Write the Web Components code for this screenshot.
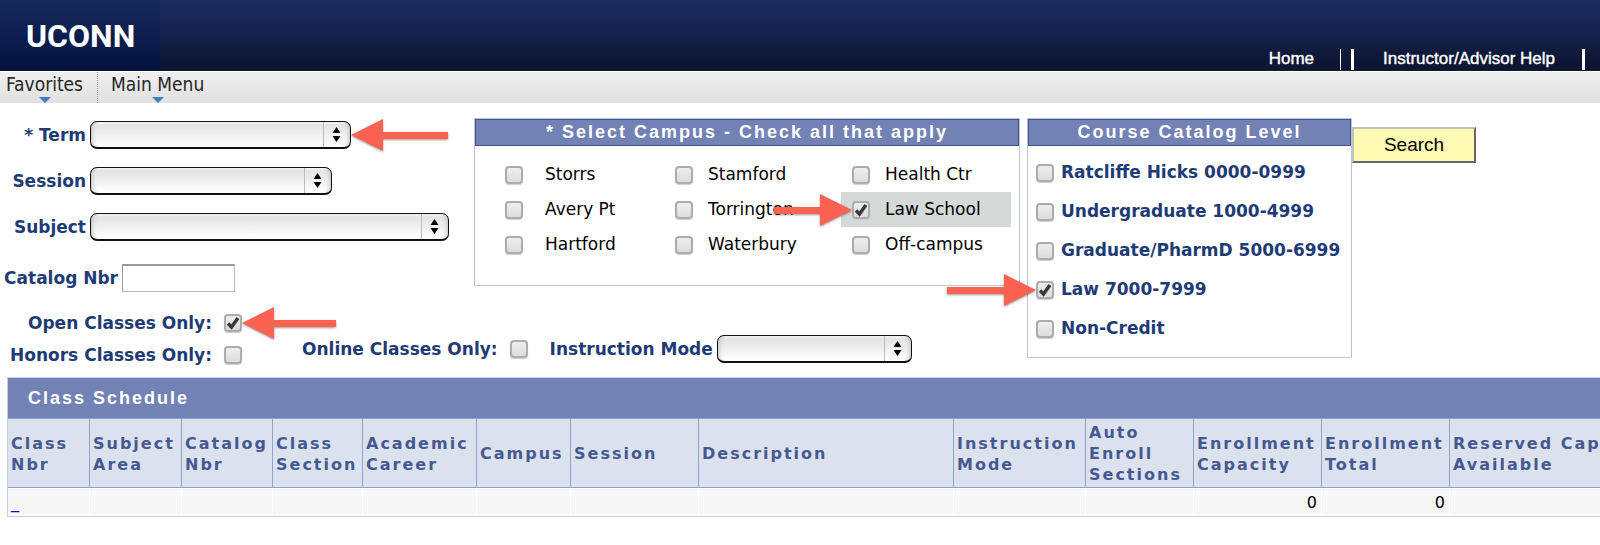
<!DOCTYPE html>
<html lang="en">
<head>
<meta charset="utf-8">
<title>Class Schedule Search</title>
<style>
html, body { margin: 0; padding: 0; background: #fff; overflow-x: hidden; }
body { font: 17px/21px "DejaVu Sans", Verdana, sans-serif; color: #000; }
</style>
</head>
<body>
<class-search-app></class-search-app>

<script>
/* Registers an element whose shadow root is filled from a markup function. */
function define(name, render) {
  customElements.define(name, class extends HTMLElement {
    constructor() {
      super();
      this.attachShadow({ mode: 'open' });
    }
    connectedCallback() {
      const t = document.createElement('template');
      t.innerHTML = render(this);
      this.shadowRoot.replaceChildren(t.content.cloneNode(true));
    }
  });
}

/* Red pointer arrow; lies over the page beside the control it is slotted in. */
define('pointer-arrow', el => {
  const w = Number(el.getAttribute('length'));
  const flip = el.getAttribute('side') === 'left';
  const y = 16;
  const d = flip
    ? `M0 ${y - 3}H${w - 32}V0L${w} ${y}L${w - 32} 32V${y + 4}H0Z`
    : `M${w} ${y - 3}H32V0L0 ${y}L32 32V${y + 4}H${w}Z`;
  return `
  <style>
    :host { position: absolute; top: 50%; margin-top: -16px; width: ${w}px; height: 32px;
      pointer-events: none; z-index: 2; ${flip ? 'right: 100%' : 'left: 100%'}; }
    svg { display: block; overflow: visible; filter: drop-shadow(0 1px 1px rgba(0,0,0,.4)); }
  </style>
  <svg width="${w}" height="32" aria-hidden="true"><path d="${d}" fill="#fa6352"/></svg>`;
});

define('site-header', () => `
  <style>
    :host { display: flex; justify-content: space-between; height: 72px; color: #fff;
      background: linear-gradient(#1a2b61, #16234f 45%, #0d1632 85%, #0d1632); border-bottom: 1px solid #fff; box-sizing: border-box; }
    .logo { width: 160px; box-sizing: border-box; padding: 20px 0 0 26px; background: linear-gradient(#172a5e, #01123c);
      font: 700 32px/32px Roboto, "Liberation Sans", sans-serif; }
    nav { display: flex; align-items: flex-end; padding: 0 15px 1px 0; font: 17px/22px "Liberation Sans", Arial, sans-serif; }
    a { color: #fff; text-decoration: none; -webkit-text-stroke: .4px #fff; }
    i { width: 3px; height: 21px; background: #fff; }
    i.thin { width: 1px; margin: 0 10px 0 26px; }
    .help { margin: 0 27px 0 29px; }
  </style>
  <div class="logo">UCONN</div>
  <nav aria-label="Site"><a href="#">Home</a><i class="thin"></i><i></i><a class="help" href="#">Instructor/Advisor Help</a><i></i></nav>`);

define('menu-bar', () => `
  <style>
    :host { display: flex; height: 31px; background: linear-gradient(#efefef, #e0e0e0);
      font: 19px/25px "DejaVu Sans Condensed", Tahoma, sans-serif; }
    a { display: flex; flex-direction: column; align-items: center; color: #262626; text-decoration: none; padding: 0 14px 0 6px; }
    a + a { padding-left: 13px; border-left: 1px dotted #999; }
    svg { display: block; }
  </style>
  <a href="#">Favorites<svg width="12" height="6" aria-hidden="true"><path d="M0 0h12L6 6z" fill="#3c7fc0"/></svg></a>
  <a href="#">Main Menu<svg width="12" height="6" aria-hidden="true"><path d="M0 0h12L6 6z" fill="#3c7fc0"/></svg></a>`);

/* Label and drop-down; "width" is the width of the drop-down. */
define('select-field', el => `
  <style>
    :host { display: flex; align-items: center; gap: 4px; }
    label { flex: 0 0 var(--label-width, auto); text-align: right; font-weight: 700; color: #1e3b76; white-space: nowrap; }
    .box { position: relative; width: ${el.getAttribute('width')}px; }
    select { display: block; appearance: none; width: 100%; height: 28px; margin: 0; border: 1px solid #111; border-width: 1px 1px 2px;
      border-radius: 7px; background: linear-gradient(#f6f6f6, #e3e3e3 12%, #fbfbfb 85%, #fff);
      box-shadow: inset 5px 0 4px -4px #bbb, inset -5px 0 4px -4px #bbb; }
    svg { position: absolute; top: 1px; right: 1px; pointer-events: none; }
  </style>
  <label for="s">${el.getAttribute('label')}</label>
  <div class="box">
    <select id="s"><option></option></select>
    <svg width="27" height="25" aria-hidden="true"><path d="M.5 0v25" stroke="#bbb"/><path d="M13.500 5l4 6h-8zM13.500 20l4-6h-8z"/></svg>
    <slot></slot>
  </div>`);

define('text-field', el => `
  <style>
    :host { display: flex; align-items: center; gap: 4px; }
    label { flex: 0 0 118px; text-align: right; font-weight: 700; color: #1e3b76; white-space: nowrap; }
    input { box-sizing: border-box; width: 113px; height: 28px; margin: 0; border: 1px solid #bbb; border-top: 2px solid #999; border-left-color: #999; background: #fff; }
  </style>
  <label for="t">${el.getAttribute('label')}</label><input id="t" type="text">`);

/* Tick box with its label after it, or before it with the "before" attribute. */
define('check-field', el => `
  <style>
    :host { display: flex; align-items: center; gap: var(--gap, 20px); color: var(--ink, #1e3b76); font-weight: var(--weight, 700); }
    :host([before]) { flex-direction: row-reverse; justify-content: flex-start; gap: 12px; }
    label { white-space: nowrap; }
    .box { position: relative; width: 18px; height: 18px; }
    input { appearance: none; display: block; box-sizing: border-box; width: 18px; height: 18px; margin: 0; border: 2px solid #acacac;
      border-radius: 4px; background: linear-gradient(#eee, #dcdcdc); box-shadow: 0 1px 1px #ccc; }
    svg { position: absolute; top: 0; left: 0; display: none; pointer-events: none; }
    input:checked + svg { display: block; }
  </style>
  <div class="box">
    <input id="c" type="checkbox"${el.hasAttribute('checked') ? ' checked' : ''}>
    <svg width="18" height="18" aria-hidden="true"><path d="M4 9.500L7.500 13L14 4" fill="none" stroke="#3a3a3a" stroke-width="3.500"/></svg>
    <slot></slot>
  </div>
  <label for="c">${el.getAttribute('label')}</label>`);

define('titled-panel', el => `
  <style>
    :host { display: block; box-sizing: border-box; border: 1px solid #bcc5de; background: #fff; }
    h2 { margin: 0; border: 1px solid #42528c; background: #7282b5; color: #fff; text-align: center;
      font: 700 18px/25px "Liberation Sans", Arial, sans-serif; letter-spacing: 2px; white-space: nowrap; }
  </style>
  <h2>${el.getAttribute('heading')}</h2><slot></slot>`);

define('campus-picker', () => `
  <style>
    :host { display: block; }
    .grid { display: grid; grid-template-columns: 170px 177px 170px; grid-auto-rows: 35px; padding: 11px 8px 23px 19px; }
    check-field { --ink: #000; --weight: 400; --gap: 15px; padding-left: 11px; }
    check-field:nth-child(3n+1) { --gap: 22px; }
    .on { background: #d4dad8; }
  </style>
  <titled-panel heading="* Select Campus - Check all that apply">
    <div class="grid">
      <check-field label="Storrs"></check-field>
      <check-field label="Stamford"></check-field>
      <check-field label="Health Ctr"></check-field>
      <check-field label="Avery Pt"></check-field>
      <check-field label="Torrington"></check-field>
      <check-field class="on" label="Law School" checked><pointer-arrow side="left" length="78"></pointer-arrow></check-field>
      <check-field label="Hartford"></check-field>
      <check-field label="Waterbury"></check-field>
      <check-field label="Off-campus"></check-field>
    </div>
  </titled-panel>`);

define('level-picker', () => `
  <style>
    :host { display: block; }
    .list { display: grid; grid-auto-rows: 39px; padding: 7px 4px 9px 8px; }
    check-field { --gap: 7px; }
  </style>
  <titled-panel heading="Course Catalog Level">
    <div class="list">
      <check-field label="Ratcliffe Hicks 0000-0999"></check-field>
      <check-field label="Undergraduate 1000-4999"></check-field>
      <check-field label="Graduate/PharmD 5000-6999"></check-field>
      <check-field label="Law 7000-7999" checked><pointer-arrow side="left" length="89"></pointer-arrow></check-field>
      <check-field label="Non-Credit"></check-field>
    </div>
  </titled-panel>`);

define('search-form', () => `
  <style>
    form { display: flex; align-items: flex-start; padding: 15px 0 13px; margin: 0; }
    .top, .bottom { display: flex; align-items: flex-start; }
    .fields { width: 474px; padding-top: 3px; display: grid; gap: 18px; --label-width: 86px; }
    text-field { margin-top: 5px; }
    .bottom { padding-top: 22px; }
    .flags { width: 242px; margin-right: 60px; display: grid; gap: 14px; }
    .flags check-field { height: 18px; }
    .modes { display: flex; align-items: center; gap: 22px; padding-top: 21px; }
    level-picker { width: 325px; margin-left: 7px; }
    button { box-sizing: border-box; width: 124px; height: 36px; margin: 9px 0 0; padding: 0; border: 2px solid;
      border-color: #c2c2c2 #666 #666 #c2c2c2; background: #fdfcb2; color: #000; font: 19px/24px "Liberation Sans", Arial, sans-serif; }
  </style>
  <form onsubmit="return false">
    <div>
      <div class="top">
        <div class="fields">
          <select-field label="* Term" width="261"><pointer-arrow side="right" length="97"></pointer-arrow></select-field>
          <select-field label="Session" width="242"></select-field>
          <select-field label="Subject" width="359"></select-field>
          <text-field label="Catalog Nbr"></text-field>
        </div>
        <campus-picker></campus-picker>
      </div>
      <div class="bottom">
        <div class="flags">
          <check-field before label="Open Classes Only:" checked><pointer-arrow side="right" length="94"></pointer-arrow></check-field>
          <check-field before label="Honors Classes Only:"></check-field>
        </div>
        <div class="modes">
          <check-field before label="Online Classes Only:"></check-field>
          <select-field label="Instruction Mode" width="195"></select-field>
        </div>
      </div>
    </div>
    <level-picker></level-picker>
    <button type="submit">Search</button>
  </form>`);

define('schedule-table', () => {
  const cols = [['Class<br>Nbr', 82], ['Subject<br>Area', 92], ['Catalog<br>Nbr', 91], ['Class<br>Section', 90],
    ['Academic<br>Career', 114], ['Campus', 94], ['Session', 128], ['Description', 255], ['Instruction<br>Mode', 132],
    ['Auto<br>Enroll<br>Sections', 108], ['Enrollment<br>Capacity', 128], ['Enrollment<br>Total', 128], ['Reserved Cap<br>Available', 0]];
  return `
  <style>
    :host { display: block; margin-left: 7px; border: 1px solid #c5cde2; border-right: 0; }
    h2 { margin: 0; padding: 0 20px; background: #7282b5; color: #fff; font: 700 18px/40px "Liberation Sans", Arial, sans-serif; letter-spacing: 2px; }
    table { width: 100%; table-layout: fixed; border-collapse: separate; border-spacing: 0; }
    th { height: 70px; box-sizing: border-box; padding: 1px 0 0 3px; border: 1px solid #8aa5cf; border-width: 1px 1px 1px 0; background: #dbe2ee;
      color: #465891; font-size: 16px; line-height: 21px; letter-spacing: 2px; text-align: left; white-space: nowrap; }
    td { height: 28px; box-sizing: border-box; padding: 0 4px 0 3px; border: 1px solid #fff; border-left: 0; background: #f7f7f7; font-size: 16px; line-height: 21px; }
    th:last-child, td:last-child { border-right: 0; }
    td.num { text-align: right; }
    a { color: #00e; text-decoration: none; }
  </style>
  <h2>Class Schedule</h2>
  <table>
    <colgroup>${cols.map(c => `<col${c[1] ? ` style="width:${c[1]}px"` : ''}>`).join('')}</colgroup>
    <thead><tr>${cols.map(c => `<th scope="col">${c[0]}</th>`).join('')}</tr></thead>
    <tbody><tr>${cols.map((c, i) => i === 0 ? '<td><a href="#" aria-label="Open class">_</a></td>'
      : i === 10 || i === 11 ? '<td class="num">0</td>' : '<td></td>').join('')}</tr></tbody>
  </table>`;
});

define('class-search-app', () => `
  <style>:host { display: block; }</style>
  <site-header></site-header>
  <menu-bar></menu-bar>
  <main><search-form></search-form><schedule-table></schedule-table></main>`);
</script>
</body>
</html>
